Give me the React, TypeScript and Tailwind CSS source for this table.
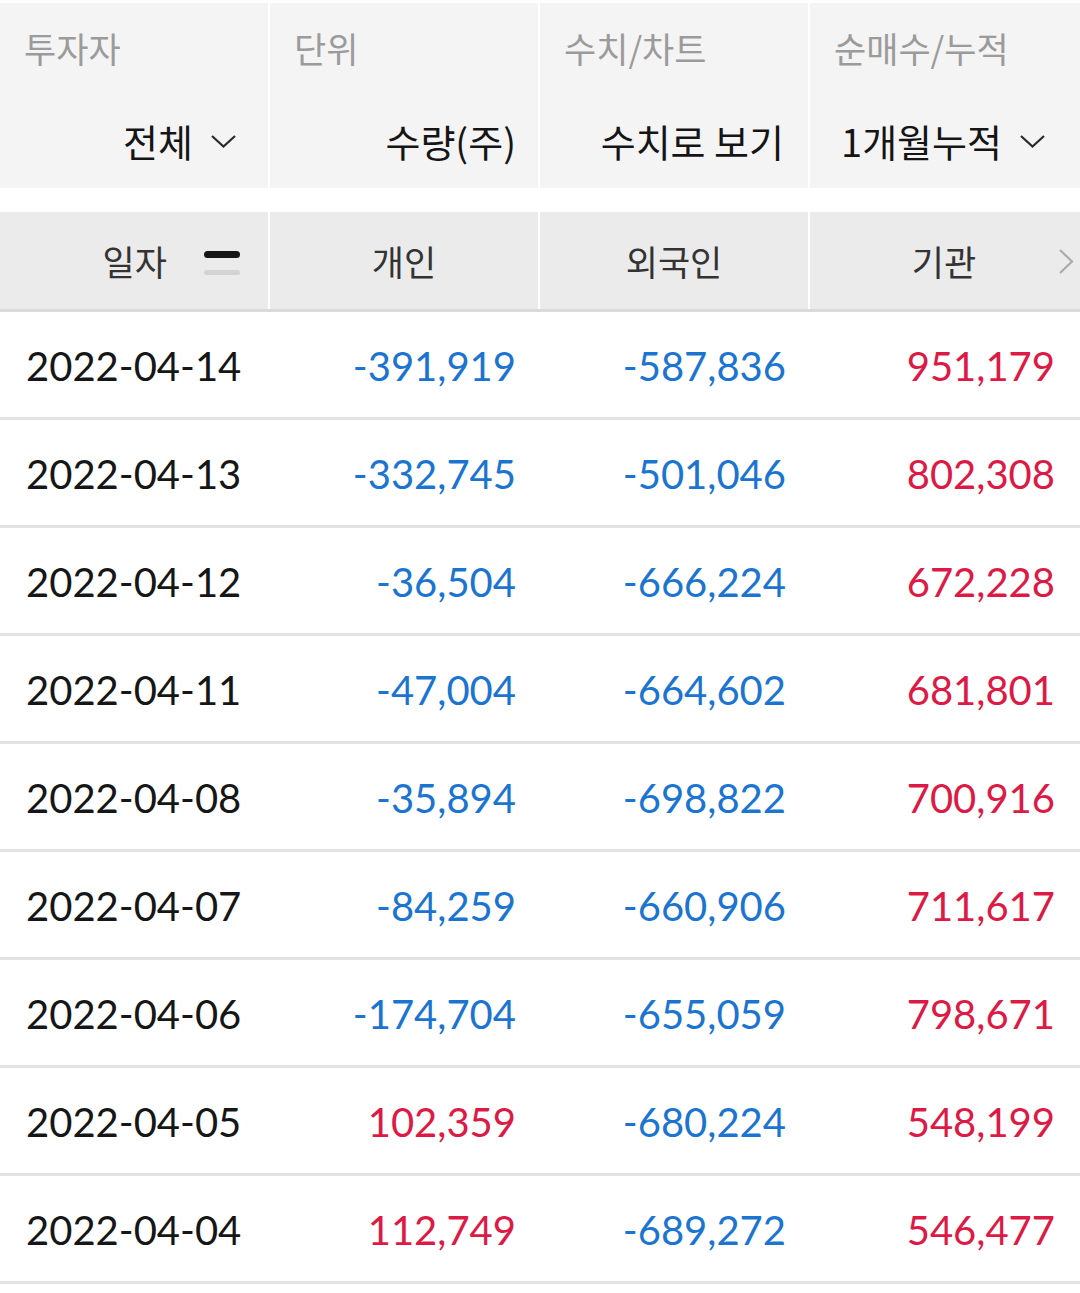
import React from "react";

const rows: [string, string, string, string][] = [
  ["2022-04-14", "-391,919", "-587,836", "951,179"],
  ["2022-04-13", "-332,745", "-501,046", "802,308"],
  ["2022-04-12", "-36,504", "-666,224", "672,228"],
  ["2022-04-11", "-47,004", "-664,602", "681,801"],
  ["2022-04-08", "-35,894", "-698,822", "700,916"],
  ["2022-04-07", "-84,259", "-660,906", "711,617"],
  ["2022-04-06", "-174,704", "-655,059", "798,671"],
  ["2022-04-05", "102,359", "-680,224", "548,199"],
  ["2022-04-04", "112,749", "-689,272", "546,477"],
];

const kr = "font-['Noto_Sans_CJK_KR','Noto_Sans',sans-serif]";
const num = "font-['Lato','Noto_Sans_CJK_KR',sans-serif]";

const ChevronDown = () => (
  <svg width="27" height="15" viewBox="0 0 27 15" fill="none">
    <polyline points="2,2 13.5,12.5 25,2" stroke="#2a2a2a" strokeWidth="2.2" />
  </svg>
);

const FilterCell = ({
  label,
  value,
  dropdown,
  pr,
}: {
  label: string;
  value: string;
  dropdown?: boolean;
  pr: string;
}) => (
  <div className="flex flex-col bg-[#f4f4f4]">
    <div className="flex h-[90px] items-center pl-[24px] text-[35px] leading-[40px] text-[#9b9b9b]">
      {label}
    </div>
    <div className={`flex h-[95px] items-center justify-end ${pr}`}>
      <span className="text-[38px] leading-[44px] text-[#151515]">{value}</span>
      {dropdown && (
        <span className="ml-[17px] mt-[2px] flex">
          <ChevronDown />
        </span>
      )}
    </div>
  </div>
);

const valueColor = (v: string) =>
  v.startsWith("-") ? "text-[#1b75d0]" : "text-[#dc1a45]";

export default function App() {
  return (
    <div className={`w-[1080px] bg-white pt-[3px] ${kr}`}>
      <div className="grid grid-cols-[268px_268px_268px_1fr] gap-x-[2px]">
        <FilterCell label="투자자" value="전체" dropdown pr="pr-[31px]" />
        <FilterCell label="단위" value="수량(주)" pr="pr-[22px]" />
        <FilterCell label="수치/차트" value="수치로 보기" pr="pr-[24px]" />
        <FilterCell label="순매수/누적" value="1개월누적" dropdown pr="pr-[34px]" />
      </div>

      <div className="mt-[24px] grid h-[100px] grid-cols-[268px_268px_268px_1fr] gap-x-[2px] border-b-[3px] border-[#dadada] text-[35px] leading-[40px] text-[#333]">
        <div className="flex items-center justify-end bg-[#ebebeb] pr-[28px]">
          <span>일자</span>
          <div className="ml-[37px] mt-[4px] flex flex-col">
            <div className="h-[7px] w-[36px] rounded-full bg-[#161616]" />
            <div className="mt-[12px] h-[5px] w-[36px] rounded-full bg-[#d3d3d3]" />
          </div>
        </div>
        <div className="flex items-center justify-center bg-[#ebebeb]">개인</div>
        <div className="flex items-center justify-center bg-[#ebebeb]">외국인</div>
        <div className="relative flex items-center justify-center bg-[#ebebeb] pr-[2px]">
          기관
          <svg
            className="absolute right-[6px] top-[36px]"
            width="16"
            height="27"
            viewBox="0 0 16 27"
            fill="none"
          >
            <polyline points="2,2 14,13.5 2,25" stroke="#ababab" strokeWidth="2.2" />
          </svg>
        </div>
      </div>

      <div className={num}>
        {rows.map(([date, a, b, c]) => (
          <div
            key={date}
            className="grid h-[108px] grid-cols-[268px_268px_268px_1fr] gap-x-[2px] border-b-[3px] border-[#e3e3e3] pt-[3px] text-[40px] leading-[50px]"
          >
            <div className="flex items-center pl-[26px] text-[#161616]">{date}</div>
            <div className={`flex items-center justify-end pr-[22px] ${valueColor(a)}`}>{a}</div>
            <div className={`flex items-center justify-end pr-[22px] ${valueColor(b)}`}>{b}</div>
            <div className={`flex items-center justify-end pr-[25px] ${valueColor(c)}`}>{c}</div>
          </div>
        ))}
      </div>
    </div>
  );
}
